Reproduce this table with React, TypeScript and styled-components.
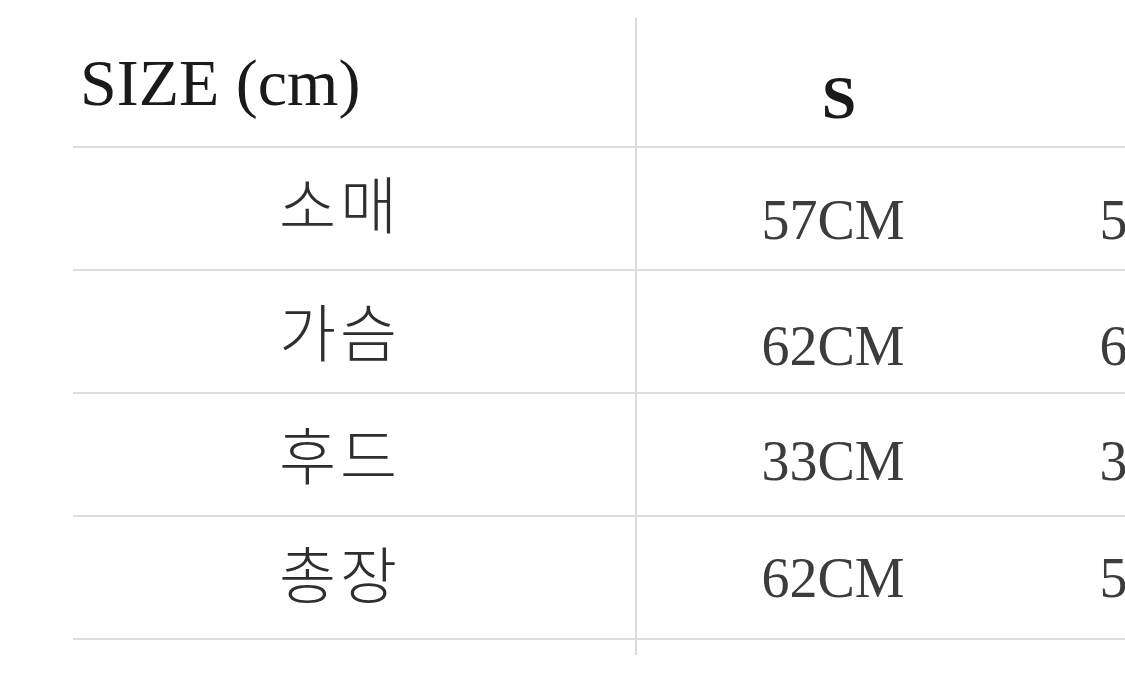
import React from "react";
import styled, { createGlobalStyle } from "styled-components";

type Row = {
  label: string;
  values: string[];
  labelShift: number;
  valueShift: number;
};

const sizes = ["S", "M"];

const rows: Row[] = [
  { label: "소매", values: ["57CM", "58CM"], labelShift: -7, valueShift: 11 },
  { label: "가슴", values: ["62CM", "64CM"], labelShift: -2, valueShift: 14 },
  { label: "후드", values: ["33CM", "34CM"], labelShift: -2, valueShift: 6 },
  { label: "총장", values: ["62CM", "58CM"], labelShift: -6, valueShift: 0 },
];

const App: React.FC = () => {
  return (
    <Page>
      <GlobalStyle />
      <Table>
        <HeaderRow>
          <HeaderLabel>SIZE (cm)</HeaderLabel>
          {sizes.map((s) => (
            <SizeHead key={s}>{s}</SizeHead>
          ))}
        </HeaderRow>
        {rows.map((row) => (
          <BodyRow key={row.label}>
            <LabelCell $shift={row.labelShift}>{row.label}</LabelCell>
            {row.values.map((v, i) => (
              <ValueCell key={i} $shift={row.valueShift}>
                {v}
              </ValueCell>
            ))}
          </BodyRow>
        ))}
        <TailRow>
          <TailCell />
        </TailRow>
      </Table>
    </Page>
  );
};

const GlobalStyle = createGlobalStyle`
  html, body {
    margin: 0;
    padding: 0;
    background: #ffffff;
    overflow: hidden;
  }
`;

const Page = styled.div`
  width: 1125px;
  height: 694px;
  overflow: hidden;
  padding: 18px 0 0 73px;
  box-sizing: border-box;
  background: #ffffff;
`;

const Table = styled.div`
  display: flex;
  flex-direction: column;
  width: 1240px;
`;

const rowGrid = `
  display: grid;
  grid-template-columns: 564px 338px 338px;
`;

const HeaderRow = styled.div`
  ${rowGrid}
  height: 130px;
  box-sizing: border-box;
  border-bottom: 2px solid #dedede;
`;

const BodyRow = styled.div`
  ${rowGrid}
  height: 123px;
  box-sizing: border-box;
  border-bottom: 2px solid #dedede;
`;

const TailRow = styled.div`
  ${rowGrid}
  height: 15px;
`;

const LabelColumn = styled.div`
  border-right: 2px solid #dadada;
  box-sizing: border-box;
`;

const HeaderLabel = styled(LabelColumn)`
  padding: 32px 0 0 7px;
  font-family: "Liberation Serif", "Times New Roman", serif;
  font-size: 66px;
  line-height: 1;
  color: #1a1a1a;
  white-space: nowrap;
`;

const SizeHead = styled.div`
  padding: 48px 0 0 66px;
  text-align: center;
  font-family: "Liberation Serif", "Times New Roman", serif;
  font-weight: 700;
  font-size: 62px;
  line-height: 1;
  color: #1a1a1a;
`;

const LabelCell = styled(LabelColumn)<{ $shift: number }>`
  display: flex;
  align-items: center;
  justify-content: flex-start;
  padding-left: 206px;
  padding-top: ${(p) => (p.$shift > 0 ? p.$shift * 2 : 0)}px;
  padding-bottom: ${(p) => (p.$shift < 0 ? -p.$shift * 2 : 0)}px;
  font-family: "Noto Sans CJK KR", "Noto Sans", sans-serif;
  font-weight: 300;
  font-size: 62px;
  line-height: 1;
  letter-spacing: 4px;
  color: #2e2e2e;
`;

const ValueCell = styled.div<{ $shift: number }>`
  display: flex;
  align-items: center;
  justify-content: center;
  padding-left: 54px;
  padding-top: ${(p) => p.$shift * 2}px;
  font-family: "Liberation Serif", "Times New Roman", serif;
  font-size: 56px;
  line-height: 1;
  color: #3c3c3c;
  white-space: nowrap;
`;

const TailCell = styled(LabelColumn)``;

export default App;
